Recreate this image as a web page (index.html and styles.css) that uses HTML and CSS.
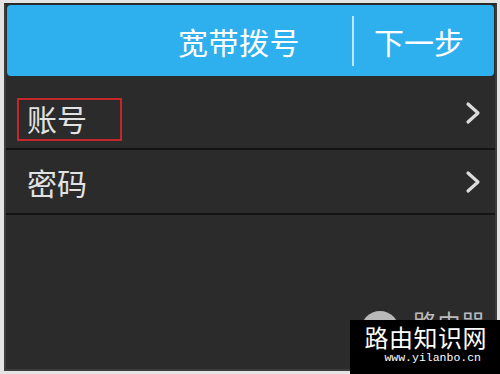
FILE: index.html
```html
<!DOCTYPE html>
<html lang="zh-CN">
<head>
<meta charset="utf-8">
<title>宽带拨号</title>
<link rel="stylesheet" href="styles.css">
</head>
<body>
<div class="screen">
  <header class="topbar">
    <span class="title">宽带拨号</span>
    <span class="divider"></span>
    <span class="next">下一步</span>
  </header>
  <div class="row row-account">
    <span class="label boxed">账号</span>
    <svg class="chev" width="16" height="24" viewBox="0 0 16 24"><polyline points="3,3 13,12 3,21" fill="none" stroke="#dcdcdc" stroke-width="3.2" stroke-linecap="round" stroke-linejoin="round"/></svg>
  </div>
  <div class="row row-password">
    <span class="label">密码</span>
    <svg class="chev" width="16" height="24" viewBox="0 0 16 24"><polyline points="3,3 13,12 3,21" fill="none" stroke="#dcdcdc" stroke-width="3.2" stroke-linecap="round" stroke-linejoin="round"/></svg>
  </div>
  <div class="rest">
    <div class="brand">
      <span class="brand-dot"></span>
      <span class="brand-text">路由器</span>
    </div>
  </div>
</div>
<div class="watermark">
  <div class="wm-title">路由知识网</div>
  <div class="wm-url">www.yilanbo.cn</div>
</div>
</body>
</html>
```
FILE: styles.css
```css
html, body {
  margin: 0;
  padding: 0;
}
body {
  width: 500px;
  height: 374px;
  background: #e4e4e4;
  position: relative;
  overflow: hidden;
  font-family: "Noto Sans CJK SC", "Noto Sans", sans-serif;
}
.screen {
  margin: 3px 3px 0 4px;
  width: 489px;
  height: 364px;
  background: #2b2b2b;
  border: 2px solid #3c3c3c;
  border-top-color: #2a2a2a;
  display: flex;
  flex-direction: column;
  overflow: hidden;
}
.topbar {
  height: 71px;
  flex: none;
  margin: 0 1px;
  background: #2fb0ee;
  border-radius: 4px;
  display: flex;
  align-items: center;
  justify-content: flex-end;
  padding-right: 30px;
  color: #ffffff;
}
.title {
  font-size: 30px;
  line-height: 1;
  letter-spacing: 0.5px;
}
.divider {
  width: 2px;
  height: 50px;
  background: #bfe6fa;
  margin: 0 20px 0 52px;
}
.next {
  font-size: 30px;
  line-height: 1;
}
.row {
  flex: none;
  display: flex;
  align-items: center;
  justify-content: space-between;
  padding: 0 14px 0 11px;
  border-bottom: 2px solid #141414;
  color: #e2e2e2;
  box-sizing: border-box;
}
.row-account {
  height: 74px;
}
.row-password {
  height: 65px;
}
.label {
  font-size: 30px;
  line-height: 1;
  padding-left: 10px;
}
.boxed {
  border: 2px solid #c4262b;
  padding: 3px 33px 6px 8px;
  margin-top: 15px;
}
.chev {
  display: block;
}
.row-account .chev {
  margin-top: 2px;
}
.rest {
  flex: 1;
  display: flex;
  justify-content: flex-end;
  align-items: flex-end;
  padding-right: 10px;
}
.brand {
  display: flex;
  align-items: flex-start;
  gap: 14px;
  margin-bottom: 20px;
}
.brand-dot {
  width: 38px;
  height: 38px;
  border-radius: 50%;
  background: #b9b9b9;
}
.brand-text {
  font-size: 24px;
  line-height: 1;
  color: #bcbcbc;
  margin-top: -1px;
}
.watermark {
  position: absolute;
  right: 0;
  bottom: 0;
  width: 150px;
  height: 54px;
  background: #000000;
  color: #ffffff;
  display: flex;
  flex-direction: column;
  align-items: flex-end;
  padding-right: 13px;
  box-sizing: border-box;
}
.wm-title {
  font-size: 24px;
  line-height: 1;
  margin-top: 5px;
  letter-spacing: 0.5px;
}
.wm-url {
  font-family: "Liberation Mono", "DejaVu Sans Mono", monospace;
  font-size: 11.5px;
  line-height: 1;
  margin-top: 3px;
  margin-right: 6px;
}
```
